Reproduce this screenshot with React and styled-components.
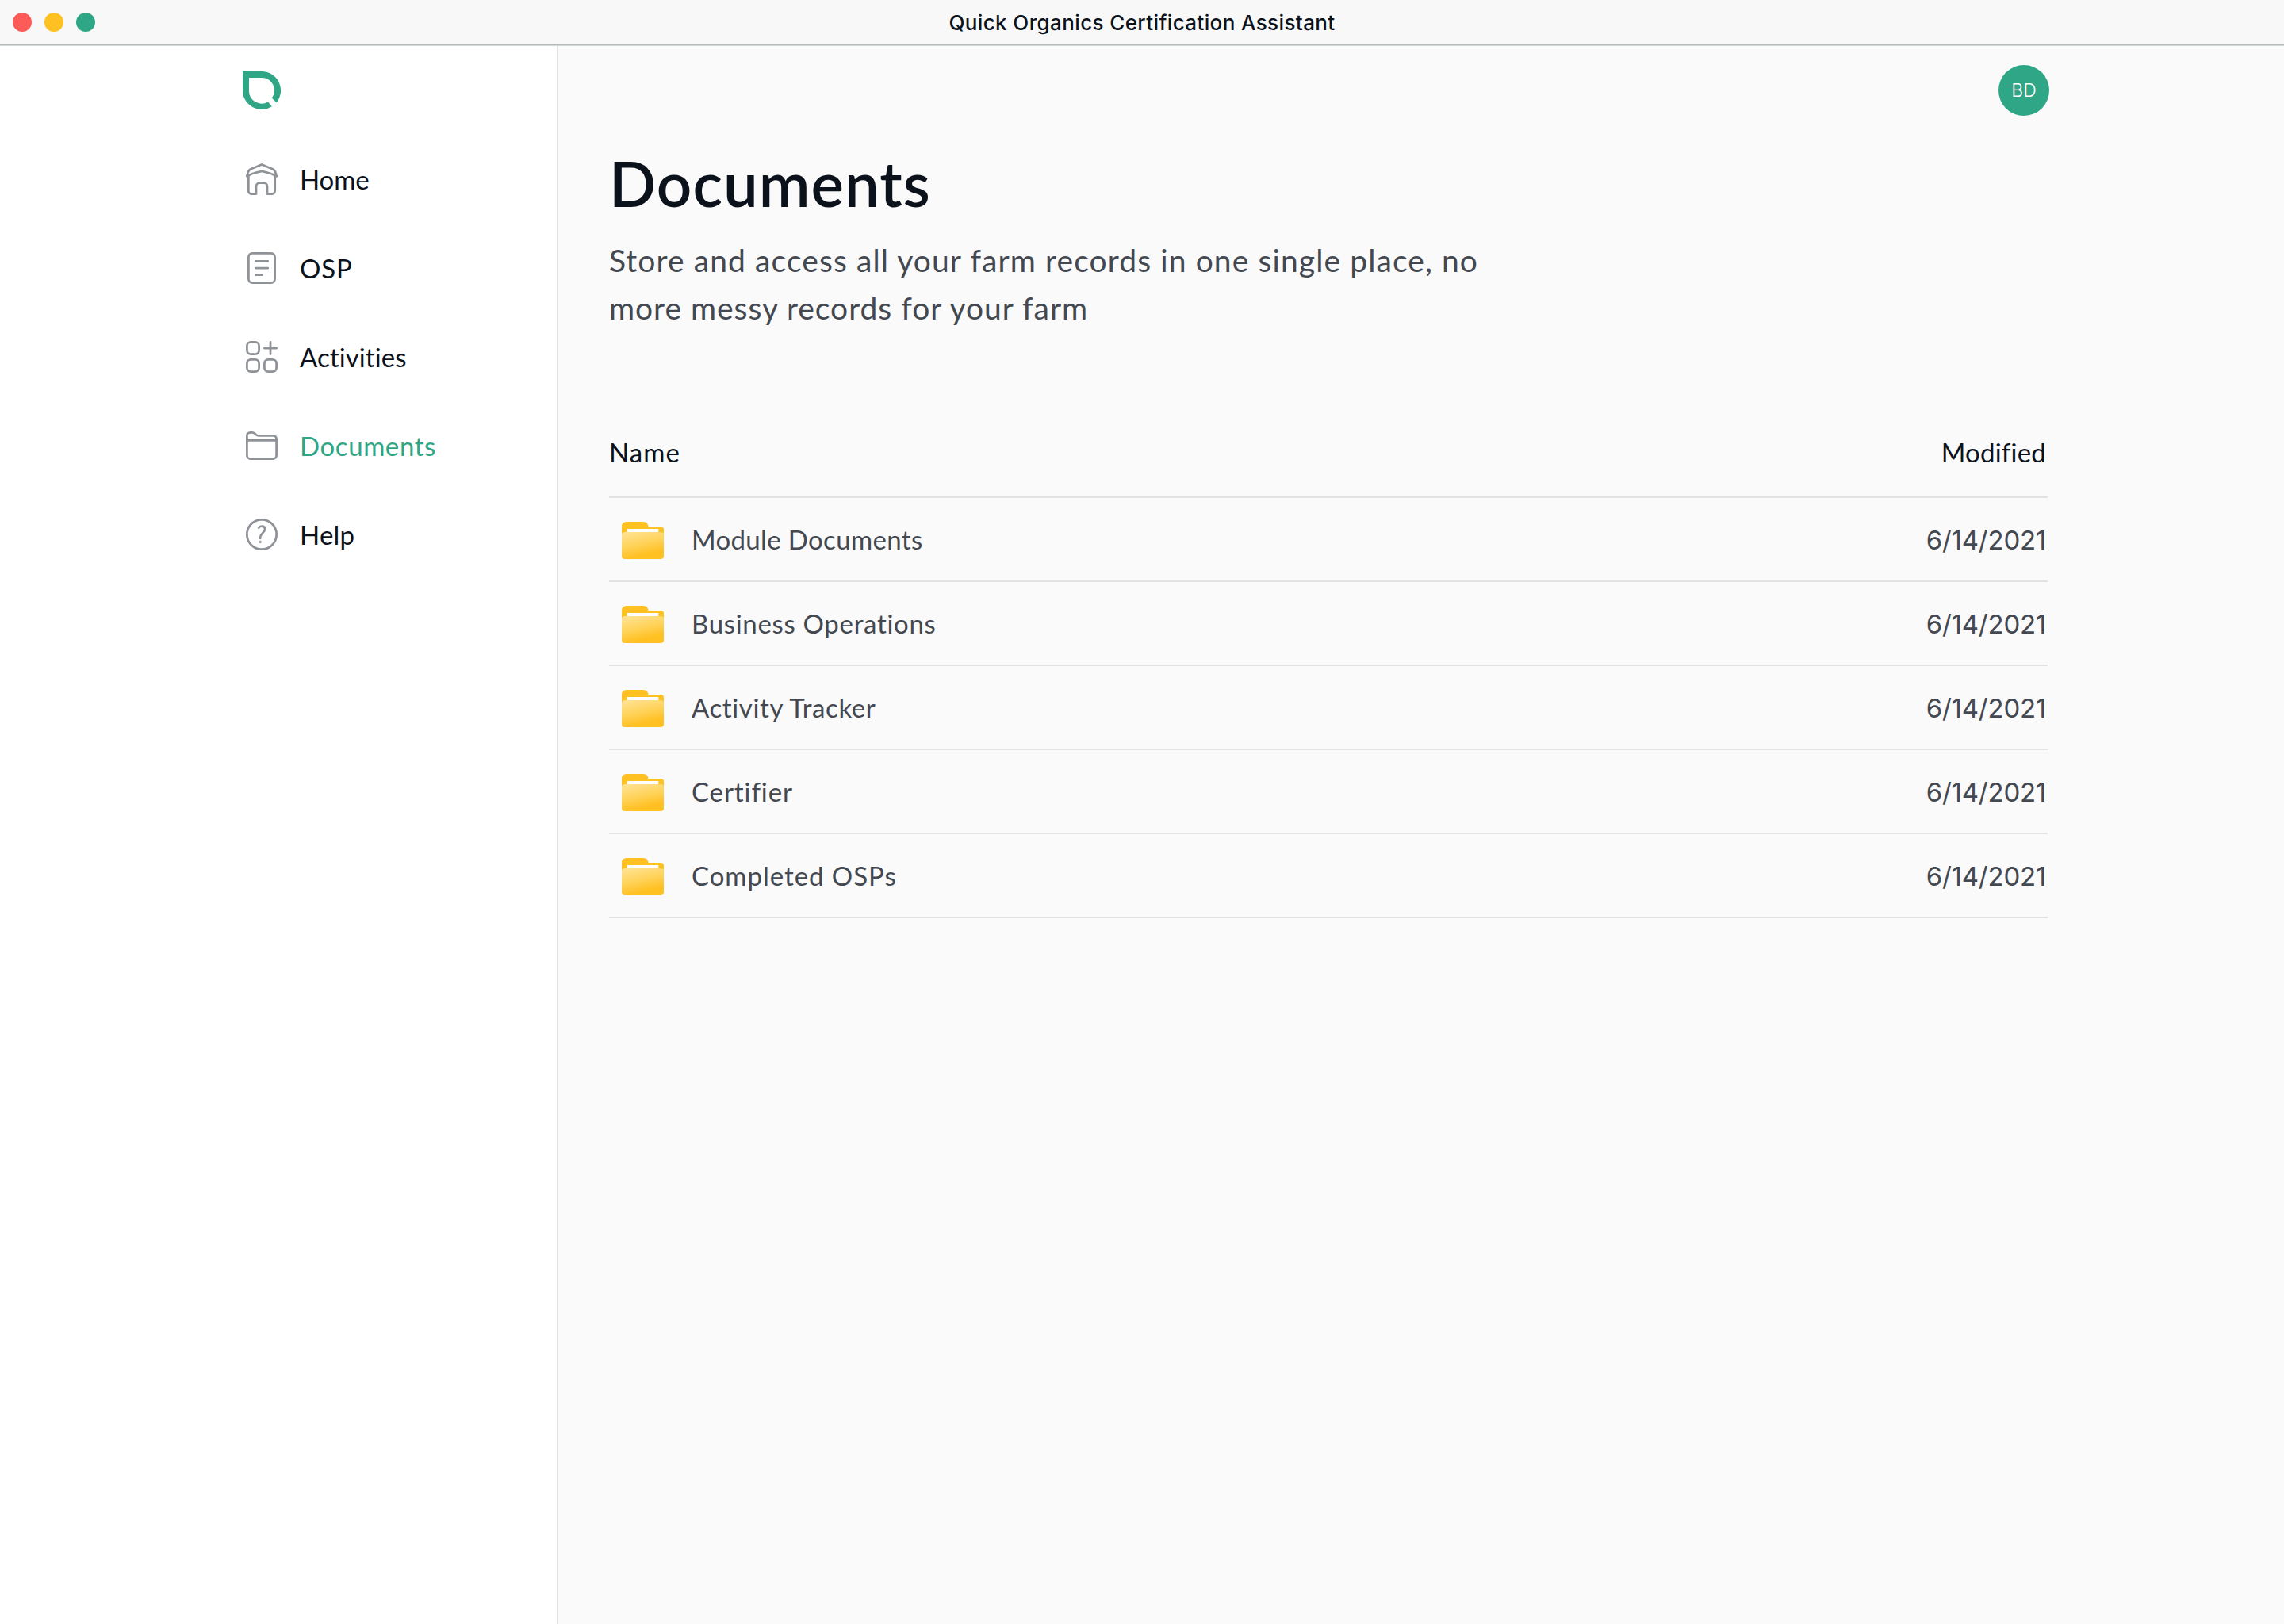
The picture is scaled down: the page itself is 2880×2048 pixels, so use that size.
import React from 'react'
import styled, { createGlobalStyle } from 'styled-components'

const navItems = [
    { label: 'Home', icon: HomeIcon, track: -0.1 },
    { label: 'OSP', icon: NoteIcon, track: 0.9 },
    { label: 'Activities', icon: GridIcon, track: 0.08 },
    { label: 'Documents', icon: DocumentsIcon, track: 0.6, active: true },
    { label: 'Help', icon: HelpIcon, track: 0.2 },
]

const folders = [
    { name: 'Module Documents', modified: '6/14/2021', track: 0.35 },
    { name: 'Business Operations', modified: '6/14/2021', track: 0.68 },
    { name: 'Activity Tracker', modified: '6/14/2021', track: 0.6 },
    { name: 'Certifier', modified: '6/14/2021', track: 0.9 },
    { name: 'Completed OSPs', modified: '6/14/2021', track: 0.96 },
]

const App = () => {
    return (
        <>
            <GlobalStyle />
            <Window>
                <TitleBar>
                    <Controls>
                        <Control $color='#fc5b57' />
                        <Control $color='#ffc022' />
                        <Control $color='#2fa685' />
                    </Controls>
                    <WindowTitle>Quick Organics Certification Assistant</WindowTitle>
                </TitleBar>
                <Body>
                    <Sidebar>
                        <Logo />
                        <Nav>
                            {navItems.map(({ label, icon: Icon, track, active }) => (
                                <NavItem key={label}>
                                    <Icon />
                                    <NavLabel $active={active} $track={track}>{label}</NavLabel>
                                </NavItem>
                            ))}
                        </Nav>
                    </Sidebar>
                    <Main>
                        <TopRow>
                            <Avatar>BD</Avatar>
                        </TopRow>
                        <Heading>Documents</Heading>
                        <Intro>
                            <IntroLine $track={1.09}>Store and access all your farm records in one single place, no</IntroLine>{' '}
                            <IntroLine $track={0.96}>more messy records for your farm</IntroLine>
                        </Intro>
                        <Table>
                            <TableHead>
                                <HeadCell $track={1.1}>Name</HeadCell>
                                <HeadCell $track={0.2}>Modified</HeadCell>
                            </TableHead>
                            {folders.map(({ name, modified, track }) => (
                                <TableRow key={name}>
                                    <FolderIcon />
                                    <FolderName $track={track}>{name}</FolderName>
                                    <Modified>{modified}</Modified>
                                </TableRow>
                            ))}
                        </Table>
                    </Main>
                </Body>
            </Window>
        </>
    )
}

function Logo() {
    return (
        <LogoSvg viewBox='0 0 48 48'>
            <path
                fill='#2fa685'
                d='M0 0H24A24 24 0 0 1 42.6 39.2L36.8 33.6A16 16 0 0 0 24 8H8V24A16 16 0 0 0 32 38.4L36.9 44.3A24 24 0 0 1 0 24Z'
            />
        </LogoSvg>
    )
}

function HomeIcon() {
    return (
        <NavSvg viewBox='0 0 40 40'>
            <path d='M3.3 15.5V35a3.5 3.5 0 0 0 3.5 3.5H13V29a4.3 4.3 0 0 1 4.3-4.3h5.4A4.3 4.3 0 0 1 27 29v9.5h6.2a3.5 3.5 0 0 0 3.5-3.5V15.5' />
            <path d='M1.3 16.3C2.2 12 3 8.8 5.6 7.5L20 1.5l14.4 6c2.6 1.3 3.4 4.5 4.3 8.8C33 13.2 27 11.2 20 10 13 11.2 7 13.2 1.3 16.3Z' />
        </NavSvg>
    )
}

function NoteIcon() {
    return (
        <NavSvg viewBox='0 0 40 40'>
            <rect x='3.4' y='1.4' width='33.2' height='37.2' rx='4.8' />
            <path d='M12.5 11.3H27.8M12.5 20H27.8M12.5 28.7H20.4' />
        </NavSvg>
    )
}

function GridIcon() {
    return (
        <NavSvg viewBox='0 0 40 40'>
            <rect x='1.4' y='1.4' width='15.2' height='15.2' rx='4.8' />
            <rect x='1.4' y='23.4' width='15.2' height='15.2' rx='4.8' />
            <rect x='23.4' y='23.4' width='15.2' height='15.2' rx='4.8' />
            <path d='M31 1.4V16.6M23.4 9H38.6' />
        </NavSvg>
    )
}

function DocumentsIcon() {
    return (
        <NavSvg viewBox='0 0 40 40'>
            <path d='M1.4 32.3V7.6a4.3 4.3 0 0 1 4.3-4.3h2.3c1.2 0 2.1.4 3 1.2l2 1.8c.8.7 1.6 1 2.7 1h18.6a4.3 4.3 0 0 1 4.3 4.3v20.7a4.3 4.3 0 0 1-4.3 4.3H5.7a4.3 4.3 0 0 1-4.3-4.3Z' />
            <path d='M1.5 13.4H38.5' />
        </NavSvg>
    )
}

function HelpIcon() {
    return (
        <NavSvg viewBox='0 0 40 40'>
            <circle cx='20' cy='20' r='18.65' />
            <path d='M16.2 11.6c.8-1.4 2.2-2 3.9-2 2.4 0 4 1.5 4 3.9 0 4.2-6 5.4-6 9.8v1.6' />
            <circle className='dot' cx='18.1' cy='29.4' r='1.6' />
        </NavSvg>
    )
}

function FolderIcon() {
    return (
        <FolderSvg viewBox='0 0 53 47'>
            <defs>
                <linearGradient id='folder-front' x1='22' y1='12' x2='30' y2='47' gradientUnits='userSpaceOnUse'>
                    <stop offset='0' stopColor='#ffe08c' />
                    <stop offset='0.5' stopColor='#ffd052' />
                    <stop offset='0.85' stopColor='#ffc022' />
                </linearGradient>
            </defs>
            <path fill='#ffc022' d='M0 5.5A5.5 5.5 0 0 1 5.5 0H27.5C31 0 33 2 33.6 6H49a4 4 0 0 1 4 4V24H0Z' />
            <path fill='#fff' d='M6.7 9H46.3V16H6.7Z' />
            <path fill='url(#folder-front)' d='M0 17a4 4 0 0 1 4-4H49a4 4 0 0 1 4 4V43a4 4 0 0 1-4 4H4a4 4 0 0 1-4-4Z' />
        </FolderSvg>
    )
}

const GlobalStyle = createGlobalStyle`
    * {
        box-sizing: border-box;
    }
    body {
        margin: 0;
        font-family: Lato, 'Liberation Sans', sans-serif;
        color: #0b121b;
    }
`
const Window = styled.div`
    display: flex;
    flex-direction: column;
    height: 100vh;
    background: #fafafa;
`
const TitleBar = styled.header`
    display: grid;
    grid-template-columns: 1fr auto 1fr;
    align-items: center;
    flex: none;
    height: 58px;
    padding: 0 16px 1px;
    background: #f8f8f8;
    border-bottom: 1px solid #d4d8d6;
    box-shadow: inset 0 -1px #b6bcba;
`
const Controls = styled.div`
    display: flex;
    gap: 16px;
`
const Control = styled.span`
    width: 24px;
    height: 24px;
    border-radius: 50%;
    background: ${({ $color }) => $color};
`
const WindowTitle = styled.span`
    padding-top: 2px;
    font: 500 26px/32px Inter, sans-serif;
    letter-spacing: .38px;
`
const Body = styled.div`
    display: flex;
    flex: 1;
`
const Sidebar = styled.aside`
    flex: none;
    width: 704px;
    padding: 32px 0 0 306px;
    background: #fff;
    border-right: 2px solid #e1e2e4;
`
const LogoSvg = styled.svg`
    display: block;
    width: 48px;
    height: 48px;
`
const Nav = styled.nav`
    padding: 32px 0 0 4px;
`
const NavItem = styled.div`
    display: flex;
    align-items: center;
    gap: 28px;
    height: 112px;
`
const NavSvg = styled.svg`
    flex: none;
    width: 40px;
    height: 40px;
    overflow: visible;
    fill: none;
    stroke: #8f9398;
    stroke-width: 2.75;
    stroke-linecap: round;
    stroke-linejoin: round;
    .dot {
        fill: #8f9398;
        stroke: none;
    }
`
const NavLabel = styled.span`
    font-size: 33px;
    line-height: 40px;
    letter-spacing: ${({ $track }) => $track}px;
    color: ${({ $active }) => ($active ? '#2fa685' : '#0b121b')};
`
const Main = styled.main`
    width: 1880px;
    padding: 24px 0 0 64px;
`
const TopRow = styled.div`
    display: flex;
    justify-content: flex-end;
`
const Avatar = styled.div`
    display: flex;
    align-items: center;
    justify-content: center;
    width: 64px;
    height: 64px;
    border-radius: 50%;
    background: #2fa685;
    color: #fff;
    font: 300 23px/28px Inter, sans-serif;
`
const Heading = styled.h1`
    margin: 37px 0 19px;
    font-size: 78px;
    font-weight: 600;
    line-height: 96px;
    letter-spacing: 1.05px;
`
const Intro = styled.p`
    margin: 0;
    font-size: 39px;
    line-height: 60px;
    color: #434851;
`
const IntroLine = styled.span`
    display: block;
    letter-spacing: ${({ $track }) => $track}px;
`
const Table = styled.section`
    width: 1814px;
    margin-top: 94px;
    font-size: 33px;
    line-height: 40px;
`
const TableHead = styled.div`
    display: flex;
    align-items: center;
    justify-content: space-between;
    height: 116px;
    padding: 2px 2px 0 0;
    border-bottom: 2px solid #e2e2e2;
`
const HeadCell = styled.span`
    letter-spacing: ${({ $track }) => $track}px;
`
const TableRow = styled.div`
    display: flex;
    align-items: center;
    height: 106px;
    padding: 0 2px 0 16px;
    border-bottom: 2px solid #e2e2e2;
    color: #434851;
`
const FolderSvg = styled.svg`
    flex: none;
    width: 53px;
    height: 47px;
    margin: 3px 35px 0 0;
`
const FolderName = styled.span`
    flex: 1;
    letter-spacing: ${({ $track }) => $track}px;
`
const Modified = styled.span`
    padding-top: 1px;
    font-family: Inter, sans-serif;
    letter-spacing: -.25px;
`
export default App
